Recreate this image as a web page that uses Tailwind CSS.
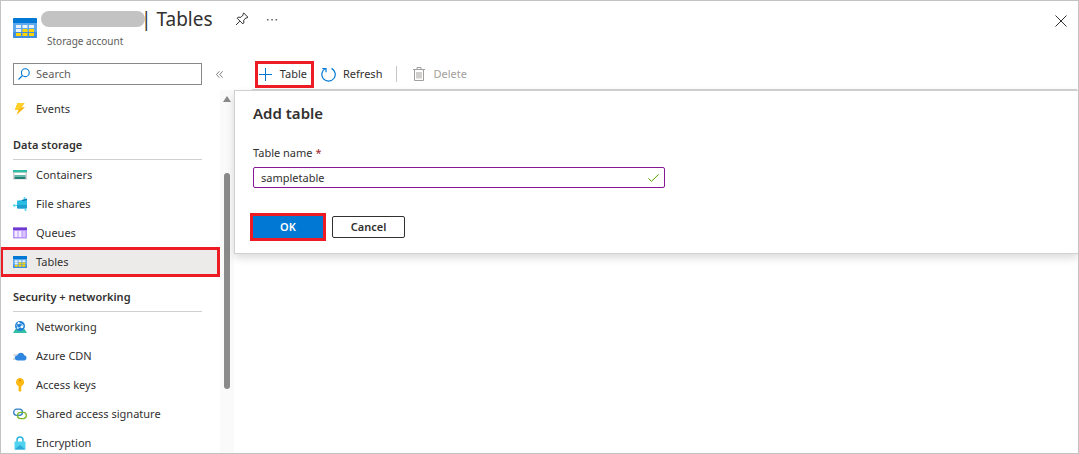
<!DOCTYPE html>
<html lang="en">
  <head>
    <meta charset="UTF-8" />
    <meta name="viewport" content="width=device-width, initial-scale=1.0" />
    <title>Tables - Storage account</title>
    <script src="https://cdn.jsdelivr.net/npm/@tailwindcss/browser@4"></script>
  </head>
  <body class="bg-white font-['Noto_Sans',sans-serif] text-[11px] leading-4 text-[#323130]">
    <!-- table icon, used in the header and in the menu -->
    <svg class="hidden">
      <symbol id="icon-table" viewBox="0 0 24 20" preserveAspectRatio="none">
        <rect width="24" height="20" rx="1" fill="#5ea8ee" />
        <rect y="14" width="24" height="6" rx="1" fill="#3f8fdf" />
        <path d="M0 1q0-1 1-1h22q1 0 1 1v4H0z" fill="#0078d4" />
        <path d="M3 7h5v3H3zM9.500 7h5v3h-5zM16 7h5v3h-5zM3 11h5v3H3z" fill="#e9f3fc" />
        <path d="M9.500 11h5v3h-5zM16 11h5v3h-5zM3 15h5v3H3zM9.500 15h5v3h-5zM16 15h5v3h-5z" fill="#ffd400" />
      </symbol>
    </svg>

    <div class="flex h-screen flex-col overflow-hidden border border-[#c3c3c3]">
      <header class="flex h-[59px] shrink-0 items-start pl-3 pr-[11px]">
        <svg class="mt-[17px] h-5 w-6 shrink-0"><use href="#icon-table" /></svg>
        <div class="ml-1">
          <div class="flex h-8 items-center pt-1">
            <span class="h-4 w-[104px] rounded-full bg-[#c3c3c3]"></span>
            <h1 class="flex gap-[5px] text-[19px] leading-7"><span class="-ml-1">|</span> Tables</h1>
            <button class="ml-[22px]" aria-label="Pin">
              <svg class="size-[14px]" viewBox="0 0 14 14" fill="none" stroke="#323130" stroke-width="1">
                <path d="M8.700 1l4.300 4.300-1.200.7-.8-.2-2.300 2.300.1 2.800-1 1L2.100 6.200l1-1 2.800.1L8.200 3 8 2.200zM4.800 9.200L1 13" />
              </svg>
            </button>
            <button class="ml-[17px]" aria-label="More">
              <svg class="h-3 w-3" viewBox="0 0 12 12" fill="#605e5c">
                <rect x="1" y="6" width="1.500" height="1.500" /><rect x="5.300" y="6" width="1.500" height="1.500" /><rect x="9.600" y="6" width="1.500" height="1.500" />
              </svg>
            </button>
          </div>
          <p class="pl-[6px] text-[10px] leading-4 text-[#605e5c]">Storage account</p>
        </div>
        <button class="ml-auto mt-[14px]" aria-label="Close">
          <svg class="size-3" viewBox="0 0 12 12" stroke="#323130" stroke-width="1"><path d="M.5.5l11 11M11.500.5l-11 11" /></svg>
        </button>
      </header>

      <div class="flex min-h-0 flex-1">
        <!-- side menu -->
        <aside class="flex w-[233px] shrink-0 flex-col">
          <div class="flex shrink-0 items-center pl-3 pt-[3px]">
            <label class="flex h-[22px] w-[189px] items-center border border-[#8a8886] pl-1">
              <svg class="size-3 shrink-0" viewBox="0 0 12 12" fill="none" stroke="#0078d4" stroke-width="1.100"><circle cx="7.300" cy="4.700" r="3.900" /><path d="M4.500 7.500L.5 11.500" /></svg>
              <input type="text" placeholder="Search" aria-label="Search" class="ml-[6px] min-w-0 flex-1 outline-none placeholder:text-[#605e5c]" />
            </label>
            <button class="ml-[14px]" aria-label="Collapse menu">
              <svg class="h-[7px] w-[7px]" viewBox="0 0 7 7" fill="none" stroke="#605e5c" stroke-width=".8"><path d="M3.300.3L.5 3.500l2.800 3.200M6.600.3L3.800 3.500l2.800 3.200" /></svg>
            </button>
          </div>
          <div class="mt-[5px] flex min-h-0 flex-1 overflow-hidden">
            <nav class="w-[219px] shrink-0 pt-1">
              <a href="#" class="mb-px flex h-[29px] items-center gap-[9px] pl-3">
                <svg class="size-[14px]" viewBox="0 0 14 14"><path d="M4.500 1h7L8.500 5.300H12L3.500 13l2-5.200H2z" fill="#fdb913" /><path d="M4.500 1h7L8.500 5.300 5 7.800H2z" fill="#ffcf2a" /></svg>
                Events
              </a>
              <h2 class="ml-3 mr-[18px] flex h-9 items-center border-b border-[#d2d0ce] pt-[6px] font-semibold">Data storage</h2>
              <a href="#" class="flex h-[29px] items-center gap-[9px] pl-3">
                <svg class="size-[14px]" viewBox="0 0 14 14"><path d="M0 4h14v7.500H0z" fill="#d2d0ce" /><path d="M0 2h14v2.300H0z" fill="#32bfa5" /><path d="M1.500 5h11v2h-11z" fill="#fff" /><path d="M1.500 7h11v2h-11z" fill="#6cb9ac" /><path d="M1.500 9h11v2h-11z" fill="#258277" /></svg>
                Containers
              </a>
              <a href="#" class="flex h-[29px] items-center gap-[9px] pl-3">
                <svg class="size-[14px]" viewBox="0 0 14 14"><path d="M4 4.500q0-1 1-1l5-.5 4-1v8.500q0 1-1 1H5q-1 0-1-1z" fill="#2bbce4" /><path d="M4 8h10v2.500q0 1-1 1H5q-1 0-1-1z" fill="#1f9fd0" /><path d="M1 8.500h3M11.500 1.500V3M12.500 11.500V13" stroke="#50d7f0" stroke-width="1.200" /><circle cx="1.200" cy="8.500" r="1.200" fill="#50d7f0" /><circle cx="11.500" cy="1" r="1" fill="#50d7f0" /><circle cx="12.500" cy="13" r="1" fill="#50d7f0" /><path d="M8.500 3l5.500-1.500V3L10 4.200z" fill="#107bb8" /></svg>
                File shares
              </a>
              <a href="#" class="flex h-[29px] items-center gap-[9px] pl-3">
                <svg class="size-[14px]" viewBox="0 0 14 14"><path d="M0 1.500h14v11H0z" fill="#b796f9" /><path d="M0 1.500h14v2.500H0z" fill="#7039ce" /><path d="M1.500 5h3v6h-3zM5.500 5h3v6h-3z" fill="#f4edff" /><path d="M9.500 5h3v6h-3z" fill="#d9c4ff" /></svg>
                Queues
              </a>
              <a href="#" aria-current="page" class="-ml-px flex h-[30px] items-center gap-[9px] border-3 border-[#ed1c24] bg-[#edebe9] pl-[10px]">
                <svg class="h-3 w-[14px]"><use href="#icon-table" /></svg>
                Tables
              </a>
              <h2 class="ml-3 mr-[18px] flex h-[35px] items-center border-b border-[#d2d0ce] pt-[6px] font-semibold">Security + networking</h2>
              <a href="#" class="flex h-[29px] items-center gap-[9px] pl-3">
                <svg class="size-[14px]" viewBox="0 0 14 14"><path d="M2.500 9h9l2.500 4H0z" fill="#32bfa5" /><circle cx="7" cy="6" r="5" fill="#1f7fd8" /><path d="M3.500 4.500l2-1.500 3.500 1 2 2M3.500 5l1.500 3 3.500-1.200 1-2.800" stroke="#a9dcff" stroke-width=".8" fill="none" /><circle cx="5.700" cy="3.200" r="1.100" fill="#fff" /><circle cx="9" cy="6.800" r="1.400" fill="#fff" /><circle cx="4.700" cy="8" r="1" fill="#d4ecff" /></svg>
                Networking
              </a>
              <a href="#" class="flex h-[29px] items-center gap-[9px] pl-3">
                <svg class="size-[14px]" viewBox="0 0 14 14"><path d="M.5 6H5M1.500 8H5M0 10h5" stroke="#a9b4c0" /><path d="M4.500 11.500a2.500 2.500 0 0 1-.2-5 3.700 3.700 0 0 1 7-.3 2.700 2.700 0 0 1 .2 5.300z" fill="#2f86e0" /></svg>
                Azure CDN
              </a>
              <a href="#" class="flex h-[29px] items-center gap-[9px] pl-3">
                <svg class="size-[14px]" viewBox="0 0 14 14"><path d="M7 0a4.200 4.200 0 0 1 1.600 8v1l-.7.800.7.900-.7.900.7.800L7 14l-1.500-1.500V8A4.200 4.200 0 0 1 7 0z" fill="#fdb913" /><circle cx="7" cy="2.500" r="1" fill="#d88a08" /></svg>
                Access keys
              </a>
              <a href="#" class="flex h-[29px] items-center gap-[9px] pl-3">
                <svg class="size-[14px]" viewBox="0 0 14 14" fill="none" stroke-width="1.300"><rect x=".7" y="2.200" width="8.800" height="6.200" rx="3.100" stroke="#2f7fc8" /><rect x="4.500" y="5.400" width="8.800" height="6.200" rx="3.100" stroke="#76b82a" /></svg>
                Shared access signature
              </a>
              <a href="#" class="flex h-[29px] items-center gap-[9px] pl-3">
                <svg class="size-[14px]" viewBox="0 0 14 14"><path d="M4 6V4a3 3 0 0 1 6 0v2" fill="none" stroke="#29b6dc" stroke-width="1.500" /><rect x="1.500" y="5.500" width="11" height="8" rx=".8" fill="#4fd4ef" /><path d="M1.500 13.500l5.500-4.500 5.500 4.500z" fill="#2aa9d8" /></svg>
                Encryption
              </a>
            </nav>
            <!-- scrollbar -->
            <div class="flex flex-1 flex-col items-center bg-[#fafafa] pt-[6px]">
              <svg class="h-[6px] w-2" viewBox="0 0 8 6"><path d="M4 0l4 6H0z" fill="#8a8a8a" /></svg>
              <div class="mt-[71px] h-[216px] w-[6px] rounded-full bg-[#8a8a8a]"></div>
            </div>
          </div>
        </aside>

        <main class="min-w-0 flex-1">
          <div class="ml-[18px] mr-px flex h-[30px] items-center border-b border-[#d2d0ce] pb-px">
            <button class="ml-[3px] flex h-[27px] w-[59px] items-center justify-between border-3 border-[#ed1c24] pl-px pr-1">
              <svg class="size-[13px]" viewBox="0 0 13 13" stroke="#0078d4"><path d="M6.500 0v13M0 6.500h13" /></svg>
              Table
            </button>
            <button class="ml-[7px] flex items-center gap-[7px]">
              <svg class="size-[15px]" viewBox="0 0 15 15" fill="none" stroke="#0078d4" stroke-width="1.200"><path d="M10.500 1.400a6.700 6.700 0 1 1-6.300.2M1.300 1.500h3.700v3.700" /></svg>
              Refresh
            </button>
            <span class="ml-[14px] h-4 w-px bg-[#c8c6c4]"></span>
            <button class="ml-4 flex items-center gap-2 text-[#a19f9d]" disabled>
              <svg class="h-[14px] w-3" viewBox="0 0 12 14" fill="none" stroke="#a19f9d"><path d="M0 2.500h12M4 2.500v-2h4v2M1.500 2.500v11h9v-11M4 5v6.500M6 5v6.500M8 5v6.500" /></svg>
              Delete
            </button>
          </div>
          <form class="border-y border-l border-[#d2d0ce] pb-3 pl-[18px] pt-3 shadow-[0_4px_8px_rgba(0,0,0,0.14)]">
            <h2 class="text-[15px] leading-5 font-semibold">Add table</h2>
            <label for="table-name" class="mt-5 block leading-5">Table name <span class="text-[#a4262c]">*</span></label>
            <div class="mt-1 flex h-[21px] w-[412px] items-center rounded-xs border border-[#881798] pl-[7px] pr-[5px]">
              <input id="table-name" type="text" value="sampletable" class="min-w-0 flex-1 outline-none" />
              <svg class="h-2 w-[11px]" viewBox="0 0 11 8" fill="none" stroke="#57a300"><path d="M.4 4.300l3 3L10.600.4" /></svg>
            </div>
            <div class="-ml-[3px] mt-[25px] flex items-center gap-[6px]">
              <button type="button" class="h-7 w-[76px] border-3 border-[#ed1c24] bg-[#0078d4] font-semibold text-white">OK</button>
              <button type="button" class="h-[22px] w-[73px] rounded-xs border border-[#323130] font-semibold leading-5">Cancel</button>
            </div>
          </form>
        </main>
      </div>
    </div>
  </body>
</html>
